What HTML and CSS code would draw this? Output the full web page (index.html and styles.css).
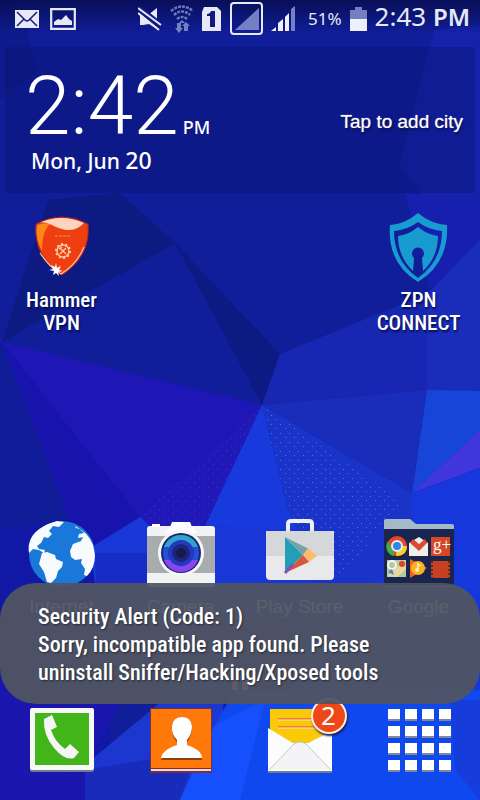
FILE: index.html
```html
<!DOCTYPE html>
<html lang="en">
<head>
<meta charset="utf-8">
<meta name="viewport" content="width=device-width, initial-scale=1">
<title>Home screen</title>
<link rel="stylesheet" href="styles.css">
</head>
<body>
<div class="screen">
  <svg class="wallpaper" viewBox="0 0 480 800" preserveAspectRatio="none" aria-hidden="true">
    <defs>
      <linearGradient id="top" x1="0" y1="0" x2="0" y2="1"><stop offset="0" stop-color="#080f58"/><stop offset="1" stop-color="#080f58" stop-opacity="0"/></linearGradient>
      <pattern id="dots" width="9" height="9" patternUnits="userSpaceOnUse"><path d="M1 1h1v1H1zM6 5h1v1H6z" fill="#6b8af5" opacity=".7"/></pattern>
    </defs>
    <rect width="480" height="800" fill="#101e9a"/>
    <path d="M0 0H18L38 70L0 100Z" fill="#0e1b8e"/>
    <path d="M48 200L120 193L175 243L2 342Z" fill="#0c1a82"/>
    <path d="M434 30L480 25V250L420 193L400 165Z" fill="#1523ac"/>
    <path d="M405 193L480 202V245L430 290Z" fill="#171fae"/>
    <path d="M480 240V391H427L426 295Z" fill="#1a2cba"/>
    <path d="M175 243L280 354L262 405Z" fill="#0d1a84"/>
    <path d="M280 354L400 305L426 295L427 390L262 405Z" fill="#1727b2"/>
    <path d="M262 405L427 390L412 493Z" fill="#192cba"/>
    <path d="M427 390L480 391V431L412 493Z" fill="#1745d8"/>
    <path d="M412 493L480 430V468Z" fill="#4135dc"/>
    <path d="M412 493L480 468V800H300L288 510Z" fill="#1537dc"/>
    <path d="M262 405L412 493V560L310 620L288 510Z" fill="#1a33c8"/>
    <path d="M262 405L405 503L340 575L288 515Z" fill="url(#dots)"/>
    <path d="M0 342L70 520L95 600L0 620Z" fill="#101b98"/>
    <path d="M0 530L70 520L110 600V800H0Z" fill="#1018a5"/>
    <path d="M2 342L262 405L203 530L140 517L95 547L70 520Z" fill="#1e16b5"/>
    <path d="M2 342L140 517L95 547L70 520Z" fill="#1813ad"/>
    <path d="M262 405L200 535H300L288 510Z" fill="#183adc"/>
    <path d="M140 517L90 548L100 620H320L300 530L205 525L150 522Z" fill="#1937d6"/>
    <path d="M95 553H150V620H98Z" fill="#182cc5"/>
    <path d="M262 405L203 530L150 526L140 517Z" fill="#2119b7"/>
    <path d="M262 405L203 530L150 526L140 517Z" fill="url(#dots)" opacity=".4"/>
    <path d="M0 620H170L85 765L0 800Z" fill="#1a16ae"/>
    <path d="M0 780L85 772V800H0Z" fill="#1a16ae"/>
    <path d="M85 765L150 711L230 640L215 790L180 800H85Z" fill="#1c36d0"/>
    <path d="M85 770L175 755L190 770L180 800H85Z" fill="#182bbb"/>
    <path d="M212 730L235 690H480V800H180Z" fill="#1048f0"/>
    <path d="M265 700L240 800H180L215 725Z" fill="#1650fc"/>
    <path d="M450 700H480V800L455 770Z" fill="#163cdc"/>
    <rect width="480" height="34" fill="url(#top)"/>
  </svg>

  <header class="status">
    <div class="status-left">
      <svg width="24" height="18" viewBox="0 0 24 18" aria-label="New message"><path fill="#e7e9f6" d="M0 0h24v18H0z"/><path d="M2 2l8 8q2 2 4 0l8-8M2 16l7-7M22 16l-7-7" fill="none" stroke="#141f82" stroke-width="1.6"/></svg>
      <svg width="26" height="22" viewBox="0 0 26 22" aria-label="Picture"><path d="M1.2 1.2h23.6v19.6H1.2z" fill="none" stroke="#e7e9f6" stroke-width="2.2"/><path d="M4 17v-3l4-3 3 1 5-5 3 4 3 2v4z" fill="#e7e9f6"/></svg>
    </div>
    <div class="status-right">
      <svg width="24" height="24" viewBox="0 0 24 24" aria-label="Muted"><path fill="#e7e9f6" d="M2 8h8l9-7v21l-8-5-6 1H2z"/><path d="M0 1l24 19" stroke="#101a80" stroke-width="7"/><path d="M0 1l23 17M0 6l21 17" stroke="#e7e9f6" stroke-width="2"/></svg>
      <svg width="24" height="28" viewBox="0 0 24 28" aria-label="Wi-Fi"><g fill="none" stroke="#6f7abc" stroke-width="2.4" stroke-dasharray="3 1"><path d="M1 6q11-9 22 0M4 10q8-7 16 0M7 14q5-4 10 0"/></g><path d="M12 15l3 3h-6zM7 18h4v5h2l-4 5-4-5h2zM14 26v-5h-2l4-4 4 4h-2v5z" fill="#7480c4"/></svg>
      <svg width="20" height="24" viewBox="0 0 20 24" aria-label="SIM 1"><path fill="#e7e9f6" d="M2 0h13l4 4v20H0V5z"/><path fill="#101a80" d="M9 4h4v16H8V9H5V7q3 0 4-3z"/></svg>
      <svg width="33" height="33" viewBox="0 0 33 33" aria-label="SIM 2 signal"><rect x="1" y="1" width="31" height="31" rx="3" fill="none" stroke="#e7e9f6" stroke-width="2"/><path d="M29 6v22H5z" fill="#7480c4"/></svg>
      <svg width="25" height="25" viewBox="0 0 25 25" aria-label="Signal"><path fill="#eef0fa" d="M0 25l5-4v4zM7 25v-8l5-4v12zM14 25V11l4-4v18z"/><path d="M20 25V3l4-3v25z" fill="#7480c4"/></svg>
      <span class="percent">51%</span>
      <svg width="17" height="24" viewBox="0 0 17 24" aria-label="Battery"><path d="M0 3h5V0h7v3h5v9H0z" fill="#7480c4"/><path d="M0 12h17v12H0z" fill="#eef0fa"/></svg>
      <span class="time">2:43 <b>PM</b></span>
    </div>
  </header>

  <section class="clock" aria-label="Clock">
    <div>
      <div class="clock-time">2:42 <span>PM</span></div>
      <div class="date">Mon, Jun <span>20</span></div>
    </div>
    <button class="city" type="button">Tap to add city</button>
  </section>

  <main class="apps">
    <a class="app" href="#hammer">
      <svg width="70" height="70" viewBox="0 0 70 70" aria-hidden="true">
        <path d="M9 11Q35-3 61 11Q64 43 35 62Q6 43 9 11Z" fill="#ef3e12" stroke="#a72322"/>
        <path d="M10 12Q19 9 23 11Q15 18 15 38Q8 25 10 12Z" fill="#ff8618"/>
        <path d="M12 10Q34 0 57 10Q50 18 39 17Q30 15 25 12Q17 8 12 10Z" fill="#ffd4bd"/>
        <path d="M28 23h15" stroke="#d8ac20" stroke-dasharray="3 1"/>
        <circle cx="36" cy="38" r="6" fill="none" stroke="#ffd0a4" stroke-width="1.4"/><circle cx="36" cy="38" r="7" fill="none" stroke="#ffd0a4" stroke-width="2" stroke-dasharray="2 2.4"/>
        <path d="M33 41l6-6M33 35l6 6M32 36l3-2" stroke="#ffd0a4" stroke-width="1.4"/>
        <path d="M13 40Q23 55 34 61Q50 51 57 34" fill="none" stroke="#ffc0a1" stroke-width="1.2"/>
        <path d="M29 50l1 5 4-2-2 4 4 1-5 1 1 4-3-3-3 2 1-4-5-1 4-1-2-4 4 2z" fill="#fff"/>
      </svg>
      <span>Hammer VPN</span>
    </a>
    <a class="app last" href="#zpn">
      <svg width="70" height="70" viewBox="0 0 70 70" aria-hidden="true">
        <path fill="#189bcf" fill-rule="evenodd" d="M34 0Q47 11 63 12Q65 50 34 69Q3 50 6 12Q21 11 34 0ZM34 9Q23 17 10 18Q10 48 34 65Q58 48 58 18Q45 17 34 9Z"/>
        <path fill="#189bcf" d="M34 14Q44 22 54 23Q54 44 39 58L38 45A6 6 0 1 0 30 45L29 58Q14 44 14 23Q24 22 34 14Z"/>
      </svg>
      <span>ZPN CONNECT</span>
    </a>
  </main>

  <nav class="favorites" aria-label="Favorites">
    <a class="app" href="#internet">
      <svg width="70" height="70" viewBox="0 0 70 70" aria-hidden="true">
        <circle cx="35" cy="35" r="33" fill="#1a78da"/>
        <path fill="#f8fbfd" d="M21 5l9-3 7 1-5 5-6-1-4 5 3 3-4 4-4-1-3 6-4 3 2 3 6 1-1 3-5-3-6-1-4 4Q-1 15 21 5zM15 34l5-1 8 3 1 4 7 3-1 5-4 4-2 7-5 5-4-1-3-10-5-8zM48 7Q61 13 66 26l2 10q0 13-8 21l-3-1 1-6-4-6 1-4-7 1-4-3-1-6 3-7 8-3 2-4-5 1 1-4 5-1-4-4-4-1z"/>
      </svg>
      <span>Internet</span>
    </a>
    <a class="app" href="#camera">
      <svg width="70" height="70" viewBox="0 0 70 70" aria-hidden="true">
        <rect x="1" y="7" width="68" height="61" rx="3" fill="#f1f2f3"/><path d="M1 17h68v37H1z" fill="#a9acae"/><path d="M6 5h8v3H6zM24 8l2-5h18l2 5 6 6H18z" fill="#fcfdfd"/>
        <circle cx="35" cy="34" r="23" fill="#f6f6f8"/><circle cx="35" cy="34" r="20" fill="#1b2670"/><circle cx="35" cy="34" r="18" fill="#2450d8"/><path d="M18 28a18 18 0 0 1 34 0z" fill="#2fa4cb"/><path d="M18 41a18 18 0 0 0 34 0z" fill="#8746ef"/><circle cx="35" cy="34" r="13" fill="#2238bd"/><circle cx="35" cy="34" r="9" fill="#1b247f"/><circle cx="35" cy="34" r="5" fill="#151b45"/>
      </svg>
      <span>Camera</span>
    </a>
    <a class="app" href="#play">
      <svg width="70" height="70" viewBox="0 0 70 70" aria-hidden="true">
        <path d="M23 14V5q0-3 3-3h18q3 0 3 3v9" fill="none" stroke="#eeeff2" stroke-width="4"/><path d="M1 12h68v45q0 4-4 4H5q-4 0-4-4z" fill="#e9e9eb"/><path d="M1 12h68v25H1z" fill="#d6d7da"/>
        <path d="M20 18v36l18-18z" fill="#229eb6"/><path d="M20 18l24 12-6 6z" fill="#73a4ae"/><path d="M43 29l9 8-8 6-6-7z" fill="#ffbc6b"/><path d="M20 54l24-11-6-7z" fill="#d8563c"/><path d="M20 54l8-9" stroke="#8151b7" stroke-width="3"/>
      </svg>
      <span>Play Store</span>
    </a>
    <a class="app" href="#google">
      <svg width="72" height="70" viewBox="0 0 72 70" aria-hidden="true">
        <path d="M1 2q0-2 2-2h24l6 5h36q2 0 2 2v61H1z" fill="#a4bac8"/><path d="M1 10h70v57H1z" fill="#17254f"/>
        <circle cx="14" cy="27" r="10" fill="#e8452c"/><path d="M5 22l7 14-2 1A10 10 0 0 1 5 22z" fill="#40ad46"/><path d="M14 27h10q0 10-11 10z" fill="#f8cf23"/><circle cx="14" cy="27" r="5" fill="#2a8ae5" stroke="#e5eef3" stroke-width="2"/>
        <path d="M26 24l10-6 9 6v13H26z" fill="#eeeeec"/><path d="M27 24l3-4 6 5 6-5 2 4-8 8z" fill="#dc4b30"/>
        <path d="M48 18h19v19H48z" fill="#d74726"/><text x="50" y="31" class="gplus">g+</text>
        <path d="M4 41h19v17H4z" fill="#b5c9a1"/><path d="M4 57l18-16 1 9-9 8z" fill="#e7d89a"/><circle cx="9" cy="46" r="4" fill="none" stroke="#f6f6f2" stroke-width="2"/><circle cx="19" cy="45" r="3" fill="#df432a"/><path d="M5 53l4-3 2 6z" fill="#438acb"/>
        <path d="M27 40l17 9-17 10z" fill="#ef661d"/><circle cx="35" cy="49" r="7" fill="#ffb01d"/><circle cx="34" cy="51" r="2" fill="#fff2be"/><path d="M35 51v-6l3 2" fill="none" stroke="#fff2be" stroke-width="1.5"/>
        <path d="M48 42h19v17H48z" fill="#c64124"/><path d="M49 42v17M66 42v17" stroke="#6f271e" stroke-width="2" stroke-dasharray="2 2"/>
      </svg>
      <span>Google</span>
    </a>
  </nav>

  <div class="pages" aria-hidden="true"><i></i><i></i></div>

  <nav class="dock" aria-label="Dock">
    <a href="#phone" aria-label="Phone"><svg width="66" height="66" viewBox="0 0 66 66" aria-hidden="true"><rect x="1" y="2" width="64" height="63" rx="2" fill="#747b8a"/><rect x="1" y="1" width="64" height="62" rx="2" fill="#f8f9f7"/><path d="M6 6h54v52H6z" fill="#42b51b"/><path d="M15 12l8-4 5 12-6 3q4 12 14 19l5-5 9 8-5 6q-9 3-20-10Q14 28 15 12z" fill="#f5f6f5"/></svg></a>
    <a href="#contacts" aria-label="Contacts"><svg width="66" height="66" viewBox="0 0 66 66" aria-hidden="true"><rect x="2" y="1" width="62" height="65" rx="1" fill="#73304b"/><path d="M3 62h60v2H3z" fill="#ffd5be"/><path d="M3 2h60v59H3z" fill="#ff780a"/><path d="M13 53q2-9 16-13v-5q-6-6-5-16 1-9 10-9t10 9q0 10-5 16v5q15 5 15 13z" fill="#89420e"/><path d="M13 51q2-9 16-13v-5q-6-6-5-14 1-9 10-9t10 9q0 8-5 14v5q15 5 15 13z" fill="#fff"/></svg></a>
    <a href="#messages" aria-label="Messages, 2 new"><svg width="66" height="66" viewBox="0 0 66 66" aria-hidden="true"><path d="M3 2h55v40H3z" fill="#fac908"/><path d="M11 12h39M11 20h39" stroke="#f27b37" stroke-width="2"/><path d="M11 13h39M11 21h39" stroke="#ffe6a9"/><path d="M1 22l25 14h15l24-11v41H1z" fill="#747b8a"/><path d="M1 21l25 15h15l24-12v40H1z" fill="#fbfcfc"/><path d="M2 63l25-26q6-4 12 0l25 26" fill="#f4f4f7" stroke="#c4c8ce"/></svg><span class="badge">2</span></a>
    <a href="#apps" aria-label="All apps"><svg width="66" height="66" viewBox="0 0 66 66" aria-hidden="true"><path fill="#838994" d="M2 12h12v2H2zM19 12h12v2H19zM36 12h12v2H36zM53 12h12v2H53zM2 29h12v2H2zM19 29h12v2H19zM36 29h12v2H36zM53 29h12v2H53zM2 46h12v2H2zM19 46h12v2H19zM36 46h12v2H36zM53 46h12v2H53zM2 63h12v2H2zM19 63h12v2H19zM36 63h12v2H36zM53 63h12v2H53z"/><path fill="#fff" d="M2 2h12v10H2zM19 2h12v10H19zM36 2h12v10H36zM53 2h12v10H53zM2 19h12v10H2zM19 19h12v10H19zM36 19h12v10H36zM53 19h12v10H53zM2 36h12v10H2zM19 36h12v10H19zM36 36h12v10H36zM53 36h12v10H53zM2 53h12v10H2zM19 53h12v10H19zM36 53h12v10H36zM53 53h12v10H53z"/></svg></a>
  </nav>

  <div class="toast" role="status">Security Alert (Code: 1)<br>Sorry, incompatible app found. Please uninstall Sniffer/Hacking/Xposed tools</div>
</div>
</body>
</html>
```
FILE: styles.css
```css
* { box-sizing: border-box; }

body {
  margin: 0;
  color: #fff;
  font-family: "Liberation Sans", Roboto, sans-serif;
}

a { color: inherit; text-decoration: none; }
svg { display: block; flex: none; }

.screen {
  position: relative;
  display: flex;
  flex-direction: column;
  min-height: 100vh;
  overflow: hidden;
  isolation: isolate;
}

.wallpaper {
  position: absolute;
  inset: 0;
  z-index: -1;
  width: 100%;
  height: 100%;
}

.status {
  display: flex;
  justify-content: space-between;
  height: 37px;
  padding: 0 10px 0 15px;
  color: #e7e9f6;
  font-family: "Noto Sans", "Open Sans", sans-serif;
}

.status-left, .status-right { display: flex; align-items: center; }
.status-left { gap: 11px; }
.status-right { gap: 8px; }
.percent { font-size: 17px; padding-left: 4px; }
.time { align-self: flex-start; font-size: 26px; line-height: 32px; white-space: nowrap; }
.time b { font-size: 24px; font-weight: 600; }

.clock {
  display: flex;
  justify-content: space-between;
  align-items: center;
  min-height: 146px;
  margin: 10px 5px 0;
  padding: 12px 12px 16px 20px;
  background: rgba(8, 16, 104, .35);
}

.clock-time {
  font: 300 82px/84px Roboto, sans-serif;
  white-space: nowrap;
}

.clock-time span { font: 500 18px "Noto Sans", sans-serif; margin-left: -16px; }

.date {
  padding-left: 6px;
  font: 500 21px/24px "Noto Sans", sans-serif;
}

.date span { font-size: 23px; }

.city {
  padding: 8px 0 0;
  border: 0;
  background: none;
  color: inherit;
  font: 19px "Liberation Sans", sans-serif;
  text-shadow: 1px 2px 2px #060d50, 0 0 1px #fff;
}

.apps, .favorites, .dock {
  display: grid;
  grid-template-columns: repeat(4, 1fr);
  padding: 0 2px;
}

.apps { margin-top: 20px; }

.app {
  display: flex;
  flex-direction: column;
  align-items: center;
  gap: 6px;
  font: 500 21px/23px "Liberation Sans Narrow", "Roboto Condensed", sans-serif;
  text-align: center;
  text-shadow: 1px 2px 2px #060d50;
}

.app span { max-width: 100px; }
.app.last { grid-column: 4; }

.favorites { margin-top: auto; }
.favorites .app { font-family: "Liberation Sans", sans-serif; font-size: 19px; text-shadow: none; }

.gplus { font: 17px "Liberation Serif", serif; fill: #fff; }

.pages {
  display: flex;
  justify-content: center;
  gap: 4px;
  height: 10px;
  margin: 62px 0 17px;
}

.pages i { width: 6px; background: #d7d7d7; }

.dock { padding-bottom: 27px; }
.dock a { position: relative; justify-self: center; }

.badge {
  position: absolute;
  top: -9px;
  right: -14px;
  width: 36px;
  height: 36px;
  border: 2px solid #fff1dc;
  border-radius: 50%;
  background: #ef4718;
  box-shadow: 1px 2px 2px #162060;
  font: 26px/31px "Noto Sans", sans-serif;
  text-align: center;
}

.toast {
  position: absolute;
  right: 0;
  bottom: 96px;
  left: 0;
  padding: 20px 60px 17px 38px;
  border-radius: 36px;
  background: rgba(80, 85, 98, .94);
  font: 500 22px/28px "Roboto Condensed", "Liberation Sans Narrow", sans-serif;
  text-shadow: 1px 1px 2px #252b38;
}
```
